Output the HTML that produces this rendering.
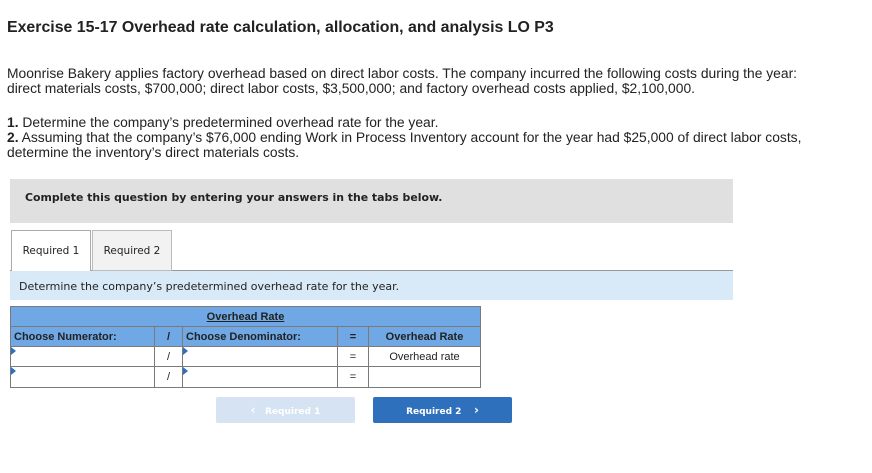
<!DOCTYPE html>
<html><head><style>
body{margin:0;width:872px;height:473px;background:#fff;font-family:"Liberation Sans",sans-serif;color:#222;position:relative;overflow:hidden}
.a{position:absolute;white-space:nowrap}
p{margin:0}
.t{font-size:13.85px;line-height:15px}
.v{font-family:"DejaVu Sans",sans-serif}
table{border-collapse:collapse;position:absolute;left:10px;top:306px;font-size:11px}
td{border:1px solid #7a7a7a;padding:0 3px;height:19px;position:relative}
.h td{background:#6fa8e4;font-weight:bold}
.tri{position:absolute;left:0;top:0;width:0;height:0;border-top:4px solid transparent;border-bottom:4px solid transparent;border-left:5px solid #2d6fc2}
</style></head><body>
<div class="a" style="left:7px;top:19px;font-size:15.9px;font-weight:bold">Exercise 15-17 Overhead rate calculation, allocation, and analysis LO P3</div>
<div class="a t" style="left:7px;top:66px">Moonrise Bakery applies factory overhead based on direct labor costs. The company incurred the following costs during the year:<br>direct materials costs, $700,000; direct labor costs, $3,500,000; and factory overhead costs applied, $2,100,000.</div>
<div class="a t" style="left:7px;top:115px"><b>1.</b> Determine the company’s predetermined overhead rate for the year.<br><b>2.</b> Assuming that the company’s $76,000 ending Work in Process Inventory account for the year had $25,000 of direct labor costs,<br>determine the inventory’s direct materials costs.</div>
<div class="a" style="left:10px;top:179px;width:723px;height:44px;background:#e0e0e0"></div>
<div class="a v" style="left:25px;top:191px;font-size:10.9px;font-weight:bold">Complete this question by entering your answers in the tabs below.</div>
<div class="a" style="left:10px;top:270px;width:723px;height:1px;background:#999"></div>
<div class="a v" style="left:11px;top:230px;width:78px;height:41px;border:1px solid #aaa;border-bottom:none;background:#fff;font-size:10.5px;text-align:center;line-height:41px">Required 1</div>
<div class="a v" style="left:92px;top:230px;width:78px;height:39px;border:1px solid #bbb;background:#f2f2f2;font-size:10.5px;text-align:center;line-height:41px">Required 2</div>
<div class="a" style="left:10px;top:271px;width:723px;height:29px;background:#d8eaf8"></div>
<div class="a v" style="left:19px;top:280px;font-size:11px">Determine the company’s predetermined overhead rate for the year.</div>
<table>
<tr class="h"><td colspan="5" style="text-align:center;height:19px"><u>Overhead Rate</u></td></tr>
<tr class="h"><td style="width:137px">Choose Numerator:</td><td style="width:21px;text-align:center">/</td><td style="width:148px">Choose Denominator:</td><td style="width:24px;text-align:center">=</td><td style="width:105px;text-align:center">Overhead Rate</td></tr>
<tr><td><span class="tri"></span></td><td style="text-align:center">/</td><td><span class="tri"></span></td><td style="text-align:center">=</td><td style="text-align:center">Overhead rate</td></tr>
<tr><td style="height:20px"><span class="tri"></span></td><td style="text-align:center">/</td><td><span class="tri"></span></td><td style="text-align:center">=</td><td></td></tr>
</table>
<div class="a v" style="left:216px;top:397px;width:139px;height:26px;background:#d6e3f3;border-radius:2px;color:#fff;font-size:9px;font-weight:bold;text-align:center;line-height:26px"><span style="font-size:12px">&lsaquo;</span>&nbsp;&nbsp; Required 1</div>
<div class="a v" style="left:373px;top:397px;width:139px;height:26px;background:#2f70bd;border-radius:2px;color:#fff;font-size:9px;font-weight:bold;text-align:center;line-height:26px">Required 2 &nbsp;&nbsp; <span style="font-size:12px">&rsaquo;</span></div>
</body></html>
